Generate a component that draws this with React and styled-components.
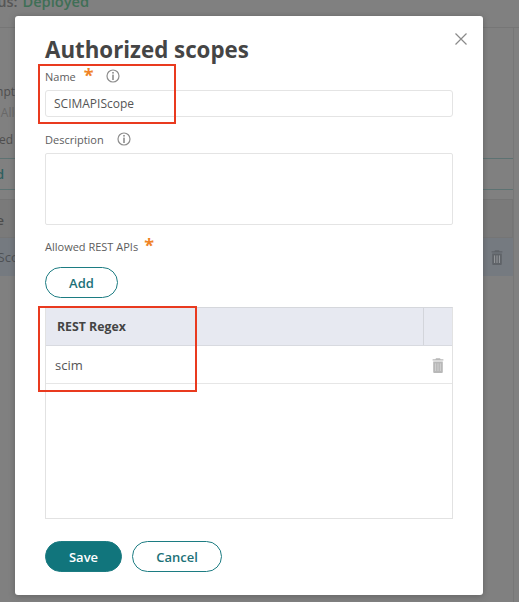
import React from 'react';
import styled, { createGlobalStyle } from 'styled-components';

const GlobalStyle = createGlobalStyle`
  html, body {
    margin: 0;
    padding: 0;
    background: #808080;
  }
  * {
    box-sizing: border-box;
  }
`;

const Page = styled.div`
  position: relative;
  display: flex;
  flex-direction: column;
  width: 519px;
  height: 602px;
  overflow: hidden;
  background: #808080;
  font-family: 'Open Sans', 'Liberation Sans', sans-serif;
`;

const Status = styled.div`
  flex: none;
  height: 28px;
  border-bottom: 1px solid #767676;
`;

const Clipped = styled.div`
  display: flex;
  justify-content: flex-end;
  width: ${(p) => p.$end}px;
  white-space: nowrap;
`;

const StatusText = styled(Clipped)`
  height: 16px;
  margin-top: -9px;
  font-size: 14.6px;
  line-height: 20px;
  font-weight: 600;
  color: #565656;

  span {
    margin-left: 5px;
    color: #3f6f56;
  }
`;

const Content = styled.div`
  flex: 1;
  width: 514px;
  padding-top: 56px;
  border-right: 1px solid #777;
`;

const BehindLine = styled(Clipped)`
  margin-top: ${(p) => p.$top || 0}px;
  height: 16px;
  font-size: 12px;
  line-height: 16px;
  color: ${(p) => p.$color || '#4e4e4e'};
`;

const BehindButton = styled.div`
  height: 32px;
  margin-top: 10px;
  border-top: 1px solid #5d7272;
  border-bottom: 1px solid #5d7272;
  font-size: 13px;
  font-weight: 600;
  line-height: 30px;
  color: #2e5f5f;
`;

const BehindHead = styled.div`
  height: 39px;
  margin-top: 9px;
  border: 1px solid #757575;
  border-left: 0;
  background: #7a7a7a;
  font-size: 13px;
  font-weight: 600;
  line-height: 40px;
  color: #4c4c4c;
`;

const BehindRow = styled.div`
  display: flex;
  align-items: center;
  justify-content: space-between;
  height: 38px;
  padding-right: 10px;
  background: #757a80;
  font-size: 13px;
  color: #4e5155;
`;

const Modal = styled.div`
  position: absolute;
  left: 15px;
  top: 16px;
  width: 468px;
  height: 579px;
  padding: 19px 30px 0;
  background: #fff;
  border-radius: 3px;
  box-shadow: 0 1px 6px rgba(60, 60, 60, 0.45);
`;

const Close = styled.button`
  position: absolute;
  top: 17px;
  right: 16px;
  width: 12px;
  height: 12px;
  padding: 0;
  border: 0;
  background: none;
  display: flex;
`;

const Title = styled.h1`
  margin: 0 0 3px;
  height: 30px;
  font-size: 22.3px;
  line-height: 30px;
  font-weight: 700;
  color: #454545;
`;

const Label = styled.div`
  display: flex;
  align-items: flex-start;
  height: 18px;
  margin-top: ${(p) => p.$top || 0}px;
  font-size: 11px;
  line-height: 18px;
  color: #5d5d5d;
`;

const Star = styled.span`
  margin-left: ${(p) => p.$gap}px;
  color: #f08326;
  font-size: 18px;
  line-height: 15px;
  font-weight: 700;
`;

const Info = styled.svg`
  width: 14px;
  height: 14px;
  margin-left: ${(p) => p.$gap}px;
  margin-top: 1px;
`;

const TextInput = styled.div`
  height: 27px;
  margin-top: 4px;
  padding-left: 8px;
  border: 1px solid #e4e4e4;
  border-radius: 3px;
  font-size: 12px;
  line-height: 25px;
  color: #555;
`;

const TextArea = styled.div`
  height: 72px;
  margin-top: 4px;
  border: 1px solid #e4e4e4;
  border-radius: 2px;
`;

const Pill = styled.button`
  width: ${(p) => p.$width}px;
  height: 31px;
  padding: 0;
  border: 1px solid #1c7c82;
  border-radius: 16px;
  background: ${(p) => (p.$primary ? '#11757c' : '#fff')};
  color: ${(p) => (p.$primary ? '#fff' : '#1c7177')};
  font-family: inherit;
  font-size: 13px;
  font-weight: 600;
`;

const AddWrap = styled.div`
  margin-top: 11px;
`;

const Table = styled.div`
  height: 212px;
  margin-top: 9px;
  border: 1px solid #e2e2e2;
  border-top-color: #d5d7dc;
`;

const HeadRow = styled.div`
  display: flex;
  height: 38px;
  background: #e7e9f1;
  border-bottom: 1px solid #d8dae0;
`;

const HeadCell = styled.div`
  flex: 1;
  padding-left: 11px;
  font-size: 12.3px;
  font-weight: 700;
  line-height: 38px;
  color: #444;
`;

const HeadEnd = styled.div`
  width: 29px;
  border-left: 1px solid #d3d5db;
`;

const BodyRow = styled.div`
  display: flex;
  align-items: center;
  justify-content: space-between;
  height: 38px;
  padding: 0 8px 0 9px;
  border-bottom: 1px solid #e6e6e6;
  font-size: 13px;
  color: #555;
`;

const Footer = styled.div`
  display: flex;
  gap: 10px;
  margin-top: 22px;
`;

const Callout = styled.div`
  position: absolute;
  left: 38px;
  top: ${(p) => p.$top}px;
  width: ${(p) => p.$width}px;
  height: ${(p) => p.$height}px;
  border: 2px solid #e93a1f;
`;

const InfoIcon = ({ gap }) => (
  <Info $gap={gap} viewBox="0 0 14 14" fill="none">
    <circle cx="7" cy="7" r="6" stroke="#8d8d8d" strokeWidth="1.2" />
    <rect x="6.2" y="3" width="1.6" height="1.6" fill="#8d8d8d" />
    <rect x="6.2" y="5.6" width="1.6" height="5.4" fill="#8d8d8d" />
  </Info>
);

const TrashIcon = ({ color }) => (
  <svg width="12" height="16" viewBox="0 0 12 16">
    <path d="M4 1.2h4l.6 1H11.4v1.4H.6V2.2h2.8z" fill={color} />
    <path d="M1.2 4.4h9.6V15a1 1 0 0 1-1 1H2.2a1 1 0 0 1-1-1z" fill={color} />
    <path d="M3.6 6.4v7.6M6 6.4v7.6M8.4 6.4v7.6" stroke="#fff" strokeOpacity="0.45" strokeWidth="0.8" />
  </svg>
);

export default function App() {
  return (
    <Page>
      <GlobalStyle />
      <Status>
        <StatusText $end={89}>
          Status: <span>Deployed</span>
        </StatusText>
      </Status>
      <Content>
        <BehindLine $end={15}>Exempt</BehindLine>
        <BehindLine $end={31} $top={5} $color="#686868">Allow</BehindLine>
        <BehindLine $end={13} $top={11}>Allowed</BehindLine>
        <BehindButton>
          <Clipped $end={4}>Add</Clipped>
        </BehindButton>
        <BehindHead>
          <Clipped $end={4}>Name</Clipped>
        </BehindHead>
        <BehindRow>
          <Clipped $end={34}>SCIMAPIScope</Clipped>
          <TrashIcon color="#5f6368" />
        </BehindRow>
      </Content>
      <Modal>
        <Close aria-label="Close">
          <svg width="12" height="12" viewBox="0 0 12 12">
            <path d="M.5.5l11 11M11.5.5l-11 11" stroke="#8a8a8a" strokeWidth="1.2" />
          </svg>
        </Close>
        <Title>Authorized scopes</Title>
        <Label>
          Name
          <Star $gap={8}>*</Star>
          <InfoIcon gap={12} />
        </Label>
        <TextInput>SCIMAPIScope</TextInput>
        <Label $top={14}>
          Description
          <InfoIcon gap={13} />
        </Label>
        <TextArea />
        <Label $top={13}>
          Allowed REST APIs
          <Star $gap={6}>*</Star>
        </Label>
        <AddWrap>
          <Pill $width={73}>Add</Pill>
        </AddWrap>
        <Table>
          <HeadRow>
            <HeadCell>REST Regex</HeadCell>
            <HeadEnd />
          </HeadRow>
          <BodyRow>
            scim
            <TrashIcon color="#b8b8b8" />
          </BodyRow>
        </Table>
        <Footer>
          <Pill $primary $width={77}>Save</Pill>
          <Pill $width={90}>Cancel</Pill>
        </Footer>
      </Modal>
      <Callout $top={64} $width={138} $height={60} />
      <Callout $top={306} $width={159} $height={86} />
    </Page>
  );
}
